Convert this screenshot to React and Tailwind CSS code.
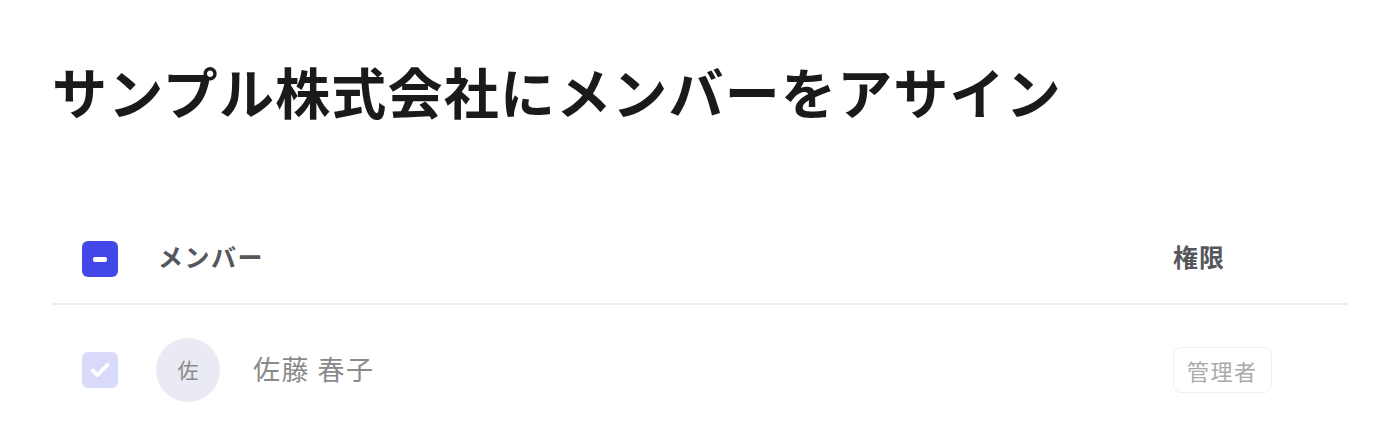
import React from 'react'

const font = { fontFamily: '"Noto Sans CJK JP", "Noto Sans", sans-serif' }

function Checkbox({ state = 'checked', dim = false }) {
  return (
    <div
      className={`w-9 h-9 rounded-[6px] flex items-center justify-center ${dim ? 'bg-[#d9dafa]' : 'bg-[#4347e8]'}`}
    >
      {state === 'indeterminate' ? (
        <div className="w-[14px] h-[5px] rounded-[2px] bg-white" />
      ) : (
        <svg width="24" height="24" viewBox="0 0 20 20" fill="none">
          <path d="M3.8 10.4l4 3.9 8.4-8.6" stroke="white" strokeWidth="3.2" strokeLinecap="round" strokeLinejoin="round" />
        </svg>
      )}
    </div>
  )
}

export default function App() {
  return (
    <div className="w-[1380px] h-[440px] bg-white pl-[52px] pr-[32px] pt-[52px]" style={font}>
      <h1 className="text-[55px] leading-[76px] font-bold text-[#1a1a1a] tracking-[1.2px]">
        サンプル株式会社にメンバーをアサイン
      </h1>

      <div className="mt-[91px]">
        {/* header */}
        <div className="flex items-center h-[86px] pb-[4px] pl-[30px] border-b-2 border-[#eceef1]">
          <Checkbox state="indeterminate" />
          <div className="ml-[40px] flex-1 text-[25px] font-bold text-[#55575c] tracking-[1.5px] -translate-y-[2px]">メンバー</div>
          <div className="w-[175px] text-[25px] font-bold text-[#55575c] tracking-[1px] -translate-y-[2px]">権限</div>
        </div>

        {/* row */}
        <div className="flex items-center h-[130px] pl-[30px]">
          <Checkbox dim />
          <div className="ml-[38px] w-16 h-16 rounded-full bg-[#eaeaf5] flex items-center justify-center text-[21px] text-[#8a8a8a]">
            佐
          </div>
          <div className="ml-[33px] flex-1 text-[27px] text-[#8a8a8a] tracking-[1.5px] -translate-y-[1px]">佐藤 春子</div>
          <div className="w-[175px]">
            <span className="inline-flex items-center h-[46px] px-[13px] rounded-[8px] border border-[#f0f0f0] text-[22px] text-[#aaaaaa] tracking-[1.5px]">
              管理者
            </span>
          </div>
        </div>
      </div>
    </div>
  )
}
